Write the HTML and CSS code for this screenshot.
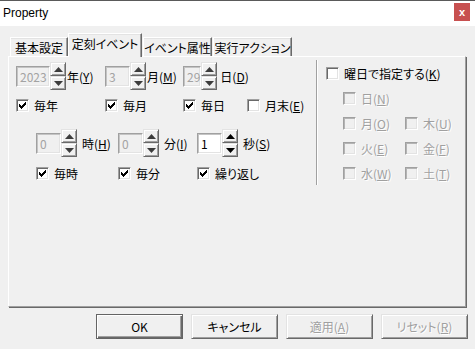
FILE: index.html
```html
<!DOCTYPE html>
<html lang="ja">
<head>
<meta charset="utf-8">
<title>Property</title>
<link rel="stylesheet" href="styles.css">
</head>
<body>
<div class="window">
  <header class="titlebar">
    <span class="title">Property</span>
    <span class="close">x</span>
  </header>

  <nav class="tabs">
    <span class="tab t1">基本設定</span>
    <span class="tab t2 active">定刻イベント</span>
    <span class="tab t3">イベント属性</span>
    <span class="tab t4">実行アクション</span>
  </nav>

  <section class="panel">
    <div class="left">
      <div class="date-row">
        <div class="spin-field">
          <span class="textbox off w34">2023</span>
          <span class="spinner off"><span class="sb"><svg width="9" height="5" viewBox="0 0 9 5"><path d="M4.5 0L9 5H0z"/></svg></span><span class="sb"><svg width="9" height="5" viewBox="0 0 9 5"><path d="M0 0h9L4.5 5z"/></svg></span></span>
          <span class="lbl d">年(<u>Y</u>)</span>
        </div>
        <div class="spin-field">
          <span class="textbox off w25">3</span>
          <span class="spinner off"><span class="sb"><svg width="9" height="5" viewBox="0 0 9 5"><path d="M4.5 0L9 5H0z"/></svg></span><span class="sb"><svg width="9" height="5" viewBox="0 0 9 5"><path d="M0 0h9L4.5 5z"/></svg></span></span>
          <span class="lbl d">月(<u>M</u>)</span>
        </div>
        <div class="spin-field">
          <span class="textbox off w25">29</span>
          <span class="spinner off"><span class="sb"><svg width="9" height="5" viewBox="0 0 9 5"><path d="M4.5 0L9 5H0z"/></svg></span><span class="sb"><svg width="9" height="5" viewBox="0 0 9 5"><path d="M0 0h9L4.5 5z"/></svg></span></span>
          <span class="lbl d3">日(<u>D</u>)</span>
        </div>
      </div>

      <div class="check-row1">
        <label class="cb"><span class="box"><svg width="7" height="7" viewBox="0 0 7 7"><path d="M0 2h1v3H0zM1 3h1v3H1zM2 4h1v3H2zM3 3h1v3H3zM4 2h1v3H4zM5 1h1v3H5zM6 0h1v3H6z"/></svg></span><span>毎年</span></label>
        <label class="cb"><span class="box"><svg width="7" height="7" viewBox="0 0 7 7"><path d="M0 2h1v3H0zM1 3h1v3H1zM2 4h1v3H2zM3 3h1v3H3zM4 2h1v3H4zM5 1h1v3H5zM6 0h1v3H6z"/></svg></span><span>毎月</span></label>
        <label class="cb"><span class="box"><svg width="7" height="7" viewBox="0 0 7 7"><path d="M0 2h1v3H0zM1 3h1v3H1zM2 4h1v3H2zM3 3h1v3H3zM4 2h1v3H4zM5 1h1v3H5zM6 0h1v3H6z"/></svg></span><span>毎日</span></label>
        <label class="cb"><span class="box"></span><span>月末(<u>E</u>)</span></label>
      </div>

      <div class="time-row">
        <div class="spin-field">
          <span class="textbox off w25">0</span>
          <span class="spinner off"><span class="sb"><svg width="9" height="5" viewBox="0 0 9 5"><path d="M4.5 0L9 5H0z"/></svg></span><span class="sb"><svg width="9" height="5" viewBox="0 0 9 5"><path d="M0 0h9L4.5 5z"/></svg></span></span>
          <span class="lbl t">時(<u>H</u>)</span>
        </div>
        <div class="spin-field">
          <span class="textbox off w25">0</span>
          <span class="spinner off"><span class="sb"><svg width="9" height="5" viewBox="0 0 9 5"><path d="M4.5 0L9 5H0z"/></svg></span><span class="sb"><svg width="9" height="5" viewBox="0 0 9 5"><path d="M0 0h9L4.5 5z"/></svg></span></span>
          <span class="lbl t">分(<u>I</u>)</span>
        </div>
        <div class="spin-field">
          <span class="textbox on w25">1</span>
          <span class="spinner"><span class="sb"><svg width="9" height="5" viewBox="0 0 9 5"><path d="M4.5 0L9 5H0z"/></svg></span><span class="sb"><svg width="9" height="5" viewBox="0 0 9 5"><path d="M0 0h9L4.5 5z"/></svg></span></span>
          <span class="lbl t">秒(<u>S</u>)</span>
        </div>
      </div>

      <div class="check-row2">
        <label class="cb"><span class="box"><svg width="7" height="7" viewBox="0 0 7 7"><path d="M0 2h1v3H0zM1 3h1v3H1zM2 4h1v3H2zM3 3h1v3H3zM4 2h1v3H4zM5 1h1v3H5zM6 0h1v3H6z"/></svg></span><span>毎時</span></label>
        <label class="cb"><span class="box"><svg width="7" height="7" viewBox="0 0 7 7"><path d="M0 2h1v3H0zM1 3h1v3H1zM2 4h1v3H2zM3 3h1v3H3zM4 2h1v3H4zM5 1h1v3H5zM6 0h1v3H6z"/></svg></span><span>毎分</span></label>
        <label class="cb"><span class="box"><svg width="7" height="7" viewBox="0 0 7 7"><path d="M0 2h1v3H0zM1 3h1v3H1zM2 4h1v3H2zM3 3h1v3H3zM4 2h1v3H4zM5 1h1v3H5zM6 0h1v3H6z"/></svg></span><span>繰り返し</span></label>
      </div>
    </div>

    <div class="divider"></div>

    <div class="right">
      <label class="cb"><span class="box"></span><span>曜日で指定する(<u>K</u>)</span></label>
      <div class="days">
        <label class="cb off"><span class="box"></span><span>日(<u>N</u>)</span></label>
        <span></span>
        <label class="cb off"><span class="box"></span><span>月(<u>O</u>)</span></label>
        <label class="cb off"><span class="box"></span><span>木(<u>U</u>)</span></label>
        <label class="cb off"><span class="box"></span><span>火(<u>E</u>)</span></label>
        <label class="cb off"><span class="box"></span><span>金(<u>F</u>)</span></label>
        <label class="cb off"><span class="box"></span><span>水(<u>W</u>)</span></label>
        <label class="cb off"><span class="box"></span><span>土(<u>T</u>)</span></label>
      </div>
    </div>
  </section>

  <footer class="buttons">
    <span class="btn default">OK</span>
    <span class="btn">キャンセル</span>
    <span class="btn off">適用(<u>A</u>)</span>
    <span class="btn off">リセット(<u>R</u>)</span>
  </footer>
</div>
</body>
</html>
```

FILE: styles.css
```css
* { box-sizing: border-box; margin: 0; padding: 0; }
html, body { width: 475px; height: 349px; overflow: hidden; }
body {
  background: #f0f0f0;
  font-family: "Noto Sans CJK JP", "Liberation Sans", sans-serif;
  font-size: 12px;
  color: #000;
  font-feature-settings: "palt";
}
u { text-decoration: underline; text-underline-offset: 1px; }

.window {
  width: 475px;
  height: 349px;
  display: flex;
  flex-direction: column;
  border-top: 1px solid #5a5a5a;
}

/* title bar */
.titlebar {
  height: 25px;
  flex: none;
  background: #fff;
  display: flex;
  align-items: flex-start;
  justify-content: space-between;
  padding: 0 5px 0 3px;
}
.title {
  font-family: "Liberation Sans", sans-serif;
  font-size: 12px;
  line-height: 24px;
  color: #000;
}
.close {
  margin-top: 2px;
  width: 16px;
  height: 18px;
  background: #c75050;
  color: #fff;
  font-family: "Liberation Sans", sans-serif;
  font-weight: bold;
  font-size: 11px;
  display: flex;
  align-items: center;
  justify-content: center;
}

/* tabs */
.tabs {
  flex: none;
  height: 24px;
  margin-top: 7px;
  padding-left: 10px;
  display: flex;
  align-items: flex-start;
}
.tab {
  height: 19px;
  margin-top: 4px;
  border-top: 1px solid #fff;
  border-left: 1px solid #fff;
  border-right: 1px solid #696969;
  box-shadow: inset -1px 0 #a0a0a0, inset 0 1px #e3e3e3;
  display: flex;
  align-items: center;
  justify-content: center;
  white-space: nowrap;
  line-height: 14px;
  padding-top: 1px;
}
.t1 { width: 58px; }
.t2 { width: 74px; }
.t3 { width: 69px; margin-left: 1px; }
.t4 { width: 79px; margin-left: 1px; }
.tab.active {
  position: relative;
  z-index: 1;
  height: 24px;
  margin-top: 0;
  background: #f0f0f0;
  padding-top: 0;
  padding-bottom: 4px;
}

/* panel */
.panel {
  flex: none;
  margin-top: -1px;
  margin-left: 8px;
  width: 458px;
  height: 251px;
  border: 1px solid;
  border-color: #fff #a0a0a0 #a0a0a0 #fff;
  box-shadow: 1px 1px 0 #696969;
  display: flex;
  align-items: flex-start;
}
.left {
  width: 307px;
  flex: none;
  padding: 5px 0 0 7px;
}
.date-row {
  display: grid;
  grid-template-columns: 89px 78px 64px auto;
  height: 28px;
  align-items: center;
}
.check-row1 {
  display: grid;
  grid-template-columns: 89px 78px 64px auto;
  margin-top: 9px;
  height: 13px;
  align-items: center;
}
.time-row {
  display: grid;
  grid-template-columns: 82px 79px auto;
  padding-left: 20px;
  margin-top: 17px;
  height: 28px;
  align-items: center;
}
.check-row2 {
  display: grid;
  grid-template-columns: 82px 79px auto;
  padding-left: 20px;
  margin-top: 10px;
  height: 13px;
  align-items: center;
}

.spin-field {
  display: flex;
  align-items: center;
  height: 28px;
}
.textbox {
  height: 21px;
  border: 1px solid;
  border-color: #a0a0a0 #fff #fff #a0a0a0;
  box-shadow: inset 1px 1px #c4c4c4, inset -1px -1px #e3e3e3;
  padding-left: 3px;
  line-height: 19px;
  font-size: 12px;
  white-space: nowrap;
}
.textbox.off { color: #a3a3a3; background: #f0f0f0; }
.textbox.on { color: #000; background: #fff; }
.w34 { width: 34px; }
.w25 { width: 25px; }

.spinner {
  width: 16px;
  height: 28px;
  display: flex;
  flex-direction: column;
  flex: none;
}
.sb {
  height: 14px;
  border: 1px solid;
  border-color: #e3e3e3 #696969 #696969 #e3e3e3;
  box-shadow: inset 1px 1px #fff, inset -1px -1px #a0a0a0;
  display: flex;
  align-items: center;
  justify-content: center;
  background: #f0f0f0;
}
.sb svg { fill: #000; }
.spinner.off .sb svg { fill: #3c3c3c; }

.lbl { white-space: nowrap; line-height: 15px; }
.lbl.d { margin-left: 1px; }
.lbl.d3 { margin-left: 3px; }
.lbl.t { margin-left: 5px; }

/* checkboxes */
.cb {
  display: flex;
  align-items: center;
  gap: 5px;
  height: 13px;
  line-height: 15px;
  white-space: nowrap;
}
.box {
  width: 13px;
  height: 13px;
  flex: none;
  border: 1px solid;
  border-color: #a0a0a0 #fff #fff #a0a0a0;
  box-shadow: inset 1px 1px #696969, inset -1px -1px #e3e3e3;
  background: #fff;
  display: flex;
  align-items: center;
  justify-content: center;
}
.box svg { fill: #000; }
.cb.off { color: #a0a0a0; text-shadow: 1px 1px 0 #fff; }
.cb.off .box {
  background: #f0f0f0;
  box-shadow: inset 1px 1px #b4b4b4, inset -1px -1px #e3e3e3;
}

.divider {
  flex: none;
  width: 2px;
  height: 125px;
  margin-top: 3px;
  border-left: 1px solid #a0a0a0;
  border-right: 1px solid #fff;
}
.right {
  flex: 1;
  padding: 10px 0 0 8px;
}
.days {
  margin-top: 12px;
  padding-left: 17px;
  display: grid;
  grid-template-columns: 62px auto;
  grid-auto-rows: 13px;
  row-gap: 12px;
}

/* buttons */
.buttons {
  flex: none;
  margin-top: 7px;
  padding-right: 7px;
  display: flex;
  justify-content: flex-end;
  gap: 8px;
}
.btn {
  width: 87px;
  height: 25px;
  border: 1px solid;
  border-color: #e3e3e3 #696969 #696969 #e3e3e3;
  box-shadow: inset 1px 1px #fff, inset -1px -1px #a0a0a0;
  display: flex;
  align-items: center;
  justify-content: center;
  line-height: 15px;
  white-space: nowrap;
}
.btn.default {
  border-color: #646464;
  box-shadow: inset 1px 1px #fff, inset -1px -1px #696969, inset -2px -2px #a0a0a0;
}
.btn.off { color: #a0a0a0; text-shadow: 1px 1px 0 #fff; }
```
